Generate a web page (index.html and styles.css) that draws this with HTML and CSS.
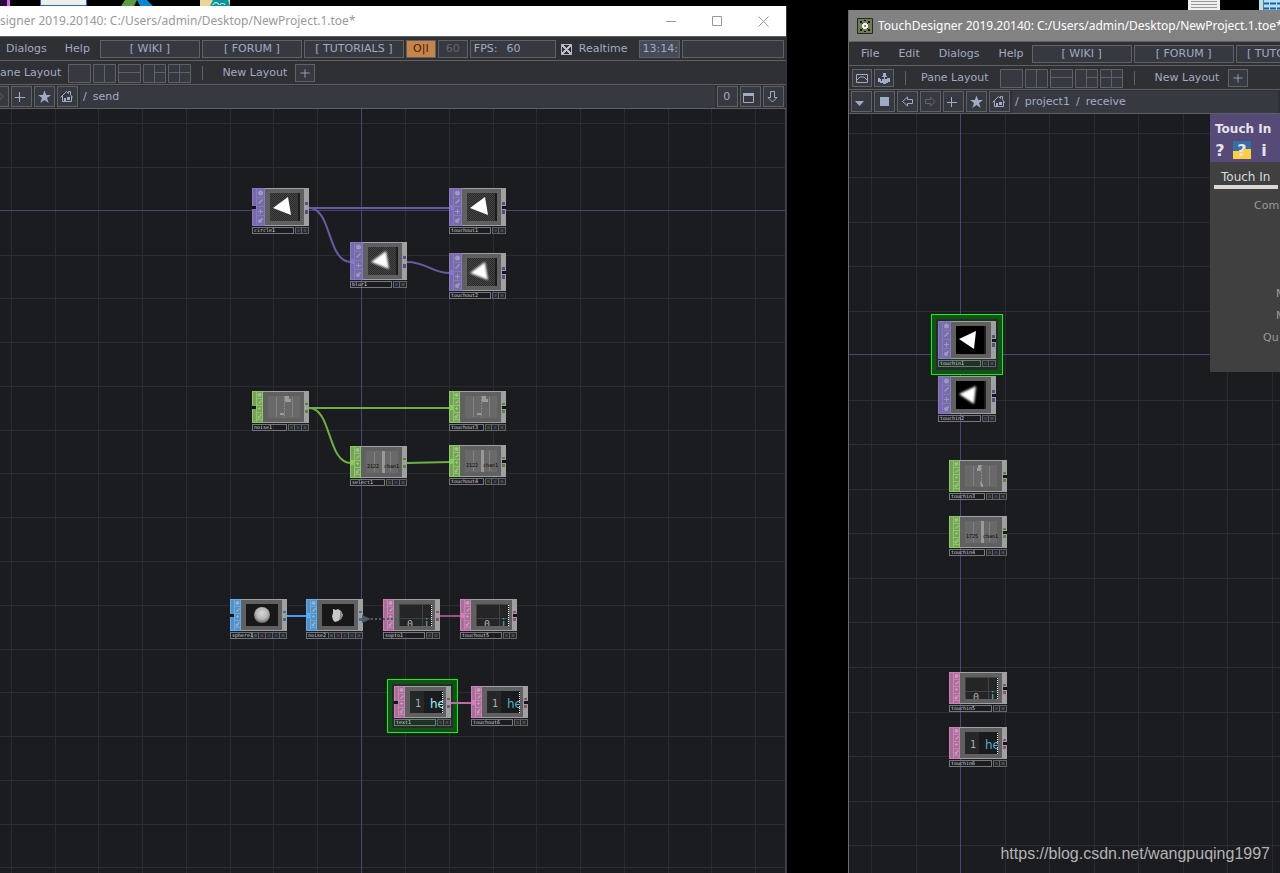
FILE: index.html
```html
<!DOCTYPE html>
<html lang="en">
<head>
<meta charset="utf-8">
<title>TouchDesigner</title>
<link rel="stylesheet" href="styles.css">
</head>
<body>
<svg class="defs" width="0" height="0" aria-hidden="true">
  <defs>
    <pattern id="check" width="2" height="2" patternUnits="userSpaceOnUse"><path d="M0 0h2v2h-2z" fill="#2a2a2a"/><path d="M0 0h1v1h-1zM1 1h1v1h-1z" fill="#454545"/></pattern>
    <filter id="soft"><feGaussianBlur stdDeviation="1"/></filter>
    <radialGradient id="ball" cx=".5" cy=".4" r=".6"><stop offset="0" stop-color="#d8d8d8"/><stop offset=".6" stop-color="#b5b5b5"/><stop offset="1" stop-color="#666"/></radialGradient>
  </defs>
  <symbol id="ports-top" viewBox="0 0 13 38">
    <path d="M0 0h13v38H0z" fill="currentColor" opacity=".6"/>
    <path d="M.5.5h12v37H.5zM4.500 0v38M4 9.500h9M4 18.500h9M4 27.500h9" fill="none" stroke="currentColor"/>
    <g fill="#c8c0e6" opacity=".5"><circle cx="8.500" cy="5" r="2.500"/><path d="M6 15l4-4 1 1-4 4zM6 23h2v-2h1v2h2v1H9v2H8v-2H6z"/><circle cx="8" cy="33" r="2"/><circle cx="10" cy="31" r="1"/></g>
  </symbol>
  <symbol id="ports-small" viewBox="0 0 11 32">
    <path d="M0 0h11v32H0z" fill="currentColor" opacity=".6"/>
    <path d="M.5.5h10v31H.5zM4.500 0v32M4 7.500h7M4 14.500h7M4 21.500h7M4 28.500h7" fill="none" stroke="currentColor"/>
    <g fill="#e8e8e8" opacity=".4"><circle cx="7.500" cy="4" r="2"/><path d="M6 12l3-3 1 1-3 3zM6 17h1v-1h1v1h1v1H8v1H7v-1H6z"/><circle cx="7" cy="26" r="1.500"/><circle cx="8.500" cy="24" r="1"/></g>
  </symbol>
  <symbol id="out-top" viewBox="0 0 5 38"><path d="M0 0h5v38H0z" fill="#a0a0a0"/><path d="M1 14h3v3H1zM1 22h3v4H1z" fill="currentColor"/><path d="M1 14h3v3H1zM1 22h3v4H1z" fill="#000" opacity=".35"/></symbol>
  <symbol id="out-small" viewBox="0 0 5 32"><path d="M0 0h5v32H0z" fill="#a0a0a0"/><path d="M1 12h3v2H1zM1 19h3v3H1z" fill="currentColor"/><path d="M1 12h3v2H1zM1 19h3v3H1z" fill="#000" opacity=".35"/></symbol>

  <symbol id="v-tri" viewBox="0 0 30 28"><path d="M0 0h30v28H0z" fill="url(#check)"/><path d="M28 0h2v28h-2z" fill="#1c1c1c"/><path d="M3 15L18 4l3 18z" fill="#fff"/></symbol>
  <symbol id="v-blur" viewBox="0 0 30 28"><path d="M0 0h30v28H0z" fill="url(#check)"/><path d="M28 0h2v28h-2z" fill="#1c1c1c"/><path d="M3 15L18 4l3 18z" fill="#fff" filter="url(#soft)"/></symbol>
  <symbol id="v-tri-black" viewBox="0 0 30 28"><path d="M0 0h30v28H0z"/><path d="M28 0h2v28h-2z" fill="#1c1c1c"/><path d="M3 13L20 5l-2 18z" fill="#fff"/></symbol>
  <symbol id="v-blur-black" viewBox="0 0 30 28"><path d="M0 0h30v28H0z"/><path d="M28 0h2v28h-2z" fill="#1c1c1c"/><path d="M3 13L20 5l-2 18z" fill="#fff" filter="url(#soft)"/></symbol>
  <symbol id="v-noise" viewBox="0 0 32 22"><path d="M0 0h32v22H0z" fill="#696969"/><path d="M8 1h1v20H8zM24 1h1v20h-1z" fill="#828282"/><path d="M16.500 0v22" stroke="#8a8a8a" stroke-dasharray="2 1"/><path d="M17 0h4v3h2v3h-6zM12 17h4v2h-4z" fill="#9c9c9c"/></symbol>
  <symbol id="v-noise-in" viewBox="0 0 32 22"><path d="M0 0h32v22H0z" fill="#696969"/><path d="M8 1h1v20H8zM24 1h1v20h-1z" fill="#828282"/><path d="M16.500 0v22" stroke="#8a8a8a" stroke-dasharray="2 1"/><path d="M13 0h3v6h-4V3h1zM15 17h2v2h1v3h-2z" fill="#9c9c9c"/></symbol>
  <symbol id="v-chan" viewBox="0 0 32 22"><path d="M0 0h32v22H0z" fill="#696969"/><path d="M8 1h1v20H8zM24 1h1v20h-1z" fill="#828282"/><path d="M16 0h3v22h-3z" fill="#999"/></symbol>
  <symbol id="v-sphere" viewBox="0 0 32 22"><path d="M0 0h32v22H0z" fill="#181818"/><circle cx="16" cy="11" r="8" fill="url(#ball)"/></symbol>
  <symbol id="v-rock" viewBox="0 0 32 22"><path d="M0 0h32v22H0z" fill="#181818"/><path d="M11 5l3 1 2-1 3 2 2 4-2 4-3 2-3 1-2-2-1-4 1-3z" fill="#c8c8c8"/><path d="M18 7l3 4-2 4-2 1 1-4z" fill="#8a8a8a"/></symbol>
  <symbol id="v-table" viewBox="0 0 33 22"><path d="M0 0h33v22H0z" fill="#242526"/><path d="M0 .5h33M.5 0v22M23.500 0v22M0 14.500h33" stroke="#424242"/><path d="M32.500 1v21" stroke="#fff" stroke-dasharray="1 1"/></symbol>
  <symbol id="v-text" viewBox="0 0 33 22"><path d="M0 0h33v22H0z" fill="#262728"/><path d="M14 0h19v22H14z" fill="#1a1b1c"/><path d="M32.500 1v21" stroke="#fff" stroke-dasharray="1 1"/></symbol>

  <symbol id="i-plus" viewBox="0 0 19 19"><path d="M9.500 5v10M4 9.500h11" stroke="currentColor" fill="none"/></symbol>
  <symbol id="i-add" viewBox="0 0 19 19"><path d="M7.500 5v10M3 10.500h10" stroke="currentColor" fill="none"/></symbol>
  <symbol id="i-star" viewBox="0 0 19 19"><path d="M9.500 3.500l1.700 4.500H16l-4 3 1.700 5-4.200-3-4.200 3L7 11 3 8h4.800z" fill="currentColor"/></symbol>
  <symbol id="i-home" viewBox="0 0 19 19"><path d="M2.500 10.500l6-6 2 2v-2h2v3l2 3M4.500 9v5.500h9V9" stroke="currentColor" fill="none"/><path d="M6 11h2v4H6zM9 10h3v3H9z" fill="currentColor"/></symbol>
  <symbol id="i-right" viewBox="0 0 19 19"><path d="M4.500 7.500h5V5L14 9.500 9.500 14v-2.500h-5z" stroke="currentColor" fill="none"/></symbol>
  <symbol id="i-left" viewBox="0 0 19 19"><path d="M14.500 7.500h-5V5L4.500 9.500 9.500 14v-2.500h5z" stroke="currentColor" fill="none"/></symbol>
  <symbol id="i-down" viewBox="0 0 19 19"><path d="M6.500 4.500h4v6H13L8.500 15 4 10.500h2.500z" stroke="currentColor" fill="none"/></symbol>
  <symbol id="i-pane" viewBox="0 0 19 19"><path d="M2.500 6.500h10v9h-10z" stroke="currentColor" fill="none"/><path d="M2 6h11v3H2z" fill="currentColor"/></symbol>
  <symbol id="i-caret" viewBox="0 0 19 19"><path d="M3 9h9l-4.500 5z" fill="currentColor"/></symbol>
  <symbol id="i-stop" viewBox="0 0 19 19"><path d="M5 5h9v9H5z" fill="currentColor"/></symbol>
  <symbol id="i-curve" viewBox="0 0 18 16"><path d="M3.500 4.500h11v8h-11zM4 10l3-3h4l3 3" stroke="currentColor" fill="none"/></symbol>
  <symbol id="i-dock" viewBox="0 0 18 16"><path d="M8 3h3v3H8zM9 5h1v9H9zM7 6h5v1H7zM3 9h3v2h7V9h2v3h-2v1h-2v1H8v-1H5v-1H3z" fill="currentColor"/><path d="M3 8h2v3H3zM12 8h3v3h-3zM7 9h5v4H7z" fill="currentColor"/></symbol>
  <symbol id="l-1" viewBox="0 0 23 19"><path d="M.5.5h22v18H.5z"/></symbol>
  <symbol id="l-2" viewBox="0 0 23 19"><path d="M.5.5h22v18H.5zM11.500 0v19"/></symbol>
  <symbol id="l-3" viewBox="0 0 23 19"><path d="M.5.5h22v18H.5zM0 8.500h23"/></symbol>
  <symbol id="l-4" viewBox="0 0 23 19"><path d="M.5.5h22v18H.5zM11.500 0v19M11 8.500h12"/></symbol>
  <symbol id="l-5" viewBox="0 0 23 19"><path d="M.5.5h22v18H.5zM11.500 0v19M0 8.500h23"/></symbol>
</svg>

<main class="desktop">
  <svg class="shortcuts shortcuts-left" width="240" height="6" aria-hidden="true">
    <path d="M0 0h7v6H0z" fill="#2c0a38"/><path d="M7 0h3v6H7z" fill="#d267e6"/>
    <path d="M40 0h47v6H40z" fill="#2766b0"/><path d="M41 0h45v5H41z" fill="#ecece8"/>
    <path d="M125 0h12l-3 6h-13z" fill="#5f9a3c"/><path d="M137 0h10l6 6h-13z" fill="#0a86cf"/>
    <path d="M200 0h30v6h-30z" fill="#e9d59a"/><path d="M210 6l3-6h15l2 6z" fill="#0c959b"/><path d="M213 5c0-3 6-3 6 0M220 5c0-2 5-2 5 0" stroke="#fff" fill="none"/>
  </svg>
  <svg class="shortcuts shortcuts-right" width="92" height="10" aria-hidden="true">
    <path d="M0 0h32v10H0z" fill="#f0f0f0"/><path d="M3 1.500h26M3 4.500h26M3 7.500h26" stroke="#999"/>
    <path d="M71 0h21v10H71z" fill="#b6ddf0"/><path d="M75 3.500h17M75 8.500h17" stroke="#1465a8" stroke-width="2" stroke-dasharray="6 1"/><path d="M75.500 0v10" stroke="#777"/>
  </svg>

  <section class="window send">
    <header class="titlebar">
      <h1 class="title">signer 2019.20140: C:/Users/admin/Desktop/NewProject.1.toe*</h1>
      <div class="controls">
        <button aria-label="Minimize"><svg width="11" height="11"><path d="M0 5.500h10"/></svg></button>
        <button aria-label="Maximize"><svg width="11" height="11"><path d="M.5.5h9v9h-9z"/></svg></button>
        <button aria-label="Close"><svg width="11" height="11"><path d="M.5.5l10 10M10.500.5l-10 10"/></svg></button>
      </div>
    </header>
    <nav class="bar menubar">
      <div class="menus"><button class="menu">Dialogs</button><button class="menu">Help</button></div>
      <button class="box link">[ WIKI ]</button>
      <button class="box link">[ FORUM ]</button>
      <button class="box link">[ TUTORIALS ]</button>
      <button class="box power">O|I</button>
      <button class="box rate">60</button>
      <output class="box fps"><span>FPS:</span><span>60</span></output>
      <label class="realtime"><input type="checkbox" checked>Realtime</label>
      <output class="box clock">13:14:</output>
      <input class="box status" type="text" aria-label="Status">
    </nav>
    <div class="bar toolbar">
      <span class="pane-label">ane Layout</span>
      <div class="layouts">
        <button aria-label="Single pane"><svg><use href="#l-1"/></svg></button><button aria-label="Split left and right"><svg><use href="#l-2"/></svg></button><button aria-label="Split top and bottom"><svg><use href="#l-3"/></svg></button><button aria-label="Split right in two"><svg><use href="#l-4"/></svg></button><button aria-label="Quad"><svg><use href="#l-5"/></svg></button>
      </div>
      <span class="rule"></span>
      <span class="new-label">New Layout</span>
      <button class="box tool" aria-label="Add layout"><svg><use href="#i-plus"/></svg></button>
    </div>
    <div class="bar pathbar">
      <button class="box icon cut dim" aria-label="Forward"><svg><use href="#i-right"/></svg></button>
      <button class="box icon" aria-label="Add"><svg><use href="#i-add"/></svg></button>
      <button class="box icon" aria-label="Bookmarks"><svg><use href="#i-star"/></svg></button>
      <button class="box icon" aria-label="Home"><svg><use href="#i-home"/></svg></button>
      <div class="path"><span>/</span><span>send</span></div>
      <button class="box icon zero">0</button>
      <button class="box icon" aria-label="Maximize pane"><svg><use href="#i-pane"/></svg></button>
      <button class="box icon" aria-label="Collapse"><svg><use href="#i-down"/></svg></button>
    </div>
    <div class="network">
      <svg class="backdrop" aria-hidden="true">
        <path class="grid" d="M11.500 0v2000M55.500 0v2000M98.500 0v2000M142.500 0v2000M186.500 0v2000M230.500 0v2000M273.500 0v2000M317.500 0v2000M405.500 0v2000M449.500 0v2000M493.500 0v2000M536.500 0v2000M580.500 0v2000M624.500 0v2000M668.500 0v2000M711.500 0v2000M755.500 0v2000M0 14.500h3000M0 58.500h3000M0 146.500h3000M0 189.500h3000M0 233.500h3000M0 277.500h3000M0 321.500h3000M0 364.500h3000M0 408.500h3000M0 452.500h3000M0 496.500h3000M0 540.500h3000M0 583.500h3000M0 627.500h3000M0 671.500h3000M0 715.500h3000M0 758.500h3000"/>
        <path class="axis" d="M361.500 0v2000M0 101.500h3000"/>
        <g fill="none" stroke-width="2">
          <path stroke="#6c59a5" d="M309 99h141M309 99c23 0 18 54 42 54M407 153c20 0 24 11 43 11"/>
          <path stroke="#6fae46" d="M309 299h141M309 299c23 0 18 55 42 55M407 354l43-1"/>
          <path stroke="#4a9bf0" d="M287 507h20"/>
          <path stroke="#9a5484" d="M440 507h20"/>
        </g>
      </svg>
      <div class="selection" style="left:387px;top:570px;width:71px;height:54px"></div>

      <article class="node top" style="left:252px;top:79px"><div class="body"><svg class="ports"><use href="#ports-top"/></svg><svg class="view"><use href="#v-tri"/></svg><svg class="outs"><use href="#out-top"/></svg><i class="gap in"></i></div><div class="tag"><span class="name">circle1</span><i class="flag blue"></i><i class="flag"></i></div></article>
      <article class="node top" style="left:449px;top:79px"><div class="body"><svg class="ports"><use href="#ports-top"/></svg><svg class="view"><use href="#v-tri"/></svg><svg class="outs"><use href="#out-top"/></svg><i class="plug"></i><i class="gap out"></i></div><div class="tag"><span class="name">touchout1</span><i class="flag blue"></i><i class="flag"></i></div></article>
      <article class="node top" style="left:350px;top:133px"><div class="body"><svg class="ports"><use href="#ports-top"/></svg><svg class="view"><use href="#v-blur"/></svg><svg class="outs"><use href="#out-top"/></svg><i class="plug"></i></div><div class="tag"><span class="name">blur1</span><i class="flag blue"></i><i class="flag"></i></div></article>
      <article class="node top" style="left:449px;top:144px"><div class="body"><svg class="ports"><use href="#ports-top"/></svg><svg class="view"><use href="#v-blur"/></svg><svg class="outs"><use href="#out-top"/></svg><i class="plug"></i><i class="gap out"></i></div><div class="tag"><span class="name">touchout2</span><i class="flag blue"></i><i class="flag"></i></div></article>

      <article class="node chop" style="left:252px;top:282px"><div class="body"><svg class="ports"><use href="#ports-small"/></svg><svg class="view"><use href="#v-noise"/></svg><svg class="outs"><use href="#out-small"/></svg><i class="gap in"></i></div><div class="tag"><span class="name">noise1</span><i class="flag green"></i><i class="flag blue"></i><i class="flag"></i></div></article>
      <article class="node chop" style="left:449px;top:282px"><div class="body"><svg class="ports"><use href="#ports-small"/></svg><svg class="view"><use href="#v-noise"/></svg><svg class="outs"><use href="#out-small"/></svg><i class="plug"></i><i class="gap out"></i></div><div class="tag"><span class="name">touchout3</span><i class="flag green"></i><i class="flag blue"></i><i class="flag"></i></div></article>
      <article class="node chop" style="left:350px;top:337px"><div class="body"><svg class="ports"><use href="#ports-small"/></svg><svg class="view"><use href="#v-chan"/><text x="1" y="17">2122</text><text x="18" y="17">chan1</text></svg><svg class="outs"><use href="#out-small"/></svg><i class="plug"></i></div><div class="tag"><span class="name">select1</span><i class="flag green"></i><i class="flag blue"></i><i class="flag"></i></div></article>
      <article class="node chop" style="left:449px;top:336px"><div class="body"><svg class="ports"><use href="#ports-small"/></svg><svg class="view"><use href="#v-chan"/><text x="1" y="17">2122</text><text x="18" y="17">chan1</text></svg><svg class="outs"><use href="#out-small"/></svg><i class="plug"></i><i class="gap out"></i></div><div class="tag"><span class="name">touchout4</span><i class="flag green"></i><i class="flag blue"></i><i class="flag"></i></div></article>

      <article class="node sop" style="left:230px;top:490px"><div class="body"><svg class="ports"><use href="#ports-small"/></svg><svg class="view"><use href="#v-sphere"/></svg><svg class="outs"><use href="#out-small"/></svg><i class="gap in"></i></div><div class="tag"><span class="name">sphere1</span><i class="flag teal"></i><i class="flag red"></i><i class="flag violet"></i><i class="flag blue"></i><i class="flag"></i></div></article>
      <article class="node sop" style="left:306px;top:490px"><div class="body"><svg class="ports"><use href="#ports-small"/></svg><svg class="view"><use href="#v-rock"/></svg><svg class="outs"><use href="#out-small"/></svg><i class="plug"></i></div><div class="tag"><span class="name">noise2</span><i class="flag teal"></i><i class="flag red"></i><i class="flag violet"></i><i class="flag blue"></i><i class="flag"></i></div></article>
      <article class="node dat" style="left:383px;top:490px"><div class="body"><svg class="ports"><use href="#ports-small"/></svg><svg class="view"><use href="#v-table"/><text class="num" x="8" y="24">0</text><text class="code" x="26" y="24">i</text></svg><svg class="outs"><use href="#out-small"/></svg></div><div class="tag"><span class="name">sopto1</span><i class="flag green"></i><i class="flag"></i></div></article>
      <article class="node dat" style="left:460px;top:490px"><div class="body"><svg class="ports"><use href="#ports-small"/></svg><svg class="view"><use href="#v-table"/><text class="num" x="8" y="24">0</text><text class="code" x="26" y="24">i</text></svg><svg class="outs"><use href="#out-small"/></svg><i class="plug"></i><i class="gap out"></i></div><div class="tag"><span class="name">touchout5</span><i class="flag green"></i><i class="flag"></i></div></article>
      <article class="node dat" style="left:394px;top:577px"><div class="body"><svg class="ports"><use href="#ports-small"/></svg><svg class="view"><use href="#v-text"/><text class="num" x="5" y="16">1</text><text class="code hot" x="20" y="17">he</text></svg><svg class="outs"><use href="#out-small"/></svg><i class="gap in"></i></div><div class="tag"><span class="name">text1</span><i class="flag green"></i><i class="flag"></i></div></article>
      <article class="node dat" style="left:471px;top:577px"><div class="body"><svg class="ports"><use href="#ports-small"/></svg><svg class="view"><use href="#v-text"/><text class="num" x="5" y="16">1</text><text class="code" x="20" y="17">he</text></svg><svg class="outs"><use href="#out-small"/></svg><i class="plug"></i><i class="gap out"></i></div><div class="tag"><span class="name">touchout6</span><i class="flag green"></i><i class="flag"></i></div></article>
      <svg class="overlay" aria-hidden="true"><path d="M362 506l9 4-9 4z" fill="#4b5d6b"/><path d="M371 510h26" stroke="#4b5d6b" stroke-width="2" stroke-dasharray="2 2"/><path d="M451 594h20" stroke="#c069a6" stroke-width="2"/></svg>
    </div>
  </section>

  <section class="window receive">
    <header class="titlebar">
      <svg class="logo" width="16" height="16" aria-hidden="true"><path d="M.5.5h15v15H.5z" fill="#6f7d55" stroke="#23281c"/><path d="M4 4l8 8M12 4l-8 8" stroke="#11140c"/><path d="M3 3h2v2H3zM11 3h2v2h-2zM3 11h2v2H3zM11 11h2v2h-2zM7 2h2v1H7zM7 13h2v1H7z" fill="#11140c"/><circle cx="8" cy="8" r="3" fill="#fff"/><circle cx="8" cy="8" r="1" fill="#5a6644"/></svg>
      <h1 class="title">TouchDesigner 2019.20140: C:/Users/admin/Desktop/NewProject.1.toe*</h1>
    </header>
    <nav class="bar menubar">
      <div class="menus"><button class="menu">File</button><button class="menu">Edit</button><button class="menu">Dialogs</button><button class="menu">Help</button></div>
      <button class="box link">[ WIKI ]</button>
      <button class="box link">[ FORUM ]</button>
      <button class="box link">[ TUTORIALS ]</button>
    </nav>
    <div class="bar toolbar">
      <button class="box tool" aria-label="Curve editor"><svg><use href="#i-curve"/></svg></button>
      <button class="box tool" aria-label="Palette"><svg><use href="#i-dock"/></svg></button>
      <span class="rule"></span>
      <span class="pane-label">Pane Layout</span>
      <div class="layouts">
        <button aria-label="Single pane"><svg><use href="#l-1"/></svg></button><button aria-label="Split left and right"><svg><use href="#l-2"/></svg></button><button aria-label="Split top and bottom"><svg><use href="#l-3"/></svg></button><button aria-label="Split right in two"><svg><use href="#l-4"/></svg></button><button aria-label="Quad"><svg><use href="#l-5"/></svg></button>
      </div>
      <span class="rule"></span>
      <span class="new-label">New Layout</span>
      <button class="box tool" aria-label="Add layout"><svg><use href="#i-plus"/></svg></button>
    </div>
    <div class="bar pathbar">
      <button class="box icon" aria-label="Pane type"><svg><use href="#i-caret"/></svg></button>
      <button class="box icon" aria-label="Stop"><svg><use href="#i-stop"/></svg></button>
      <button class="box icon" aria-label="Back"><svg><use href="#i-left"/></svg></button>
      <button class="box icon dim" aria-label="Forward"><svg><use href="#i-right"/></svg></button>
      <button class="box icon" aria-label="Add"><svg><use href="#i-add"/></svg></button>
      <button class="box icon" aria-label="Bookmarks"><svg><use href="#i-star"/></svg></button>
      <button class="box icon" aria-label="Home"><svg><use href="#i-home"/></svg></button>
      <div class="path"><span>/</span><span>project1</span><span>/</span><span>receive</span></div>
    </div>
    <div class="network">
      <svg class="backdrop" aria-hidden="true">
        <path class="grid" d="M22.500 0v2000M67.500 0v2000M156.500 0v2000M200.500 0v2000M245.500 0v2000M289.500 0v2000M334.500 0v2000M378.500 0v2000M423.500 0v2000M0 19.500h3000M0 63.500h3000M0 108.500h3000M0 152.500h3000M0 197.500h3000M0 286.500h3000M0 330.500h3000M0 375.500h3000M0 419.500h3000M0 464.500h3000M0 508.500h3000M0 553.500h3000M0 598.500h3000M0 642.500h3000M0 687.500h3000M0 731.500h3000"/>
        <path class="axis" d="M111.500 0v2000M0 240.500h3000"/>
      </svg>
      <div class="selection" style="left:82px;top:200px;width:72px;height:61px"></div>
      <article class="node top" style="left:89px;top:207px"><div class="body"><svg class="ports"><use href="#ports-top"/></svg><svg class="view"><use href="#v-tri-black"/></svg><svg class="outs"><use href="#out-top"/></svg><i class="gap out"></i></div><div class="tag"><span class="name">touchin1</span><i class="flag blue"></i><i class="flag"></i></div></article>
      <article class="node top" style="left:89px;top:262px"><div class="body"><svg class="ports"><use href="#ports-top"/></svg><svg class="view"><use href="#v-blur-black"/></svg><svg class="outs"><use href="#out-top"/></svg><i class="gap out"></i></div><div class="tag"><span class="name">touchin2</span><i class="flag blue"></i><i class="flag"></i></div></article>
      <article class="node chop" style="left:100px;top:346px"><div class="body"><svg class="ports"><use href="#ports-small"/></svg><svg class="view"><use href="#v-noise-in"/></svg><svg class="outs"><use href="#out-small"/></svg><i class="gap out"></i></div><div class="tag"><span class="name">touchin3</span><i class="flag green"></i><i class="flag blue"></i><i class="flag"></i></div></article>
      <article class="node chop" style="left:100px;top:402px"><div class="body"><svg class="ports"><use href="#ports-small"/></svg><svg class="view"><use href="#v-chan"/><text x="1" y="17">1725</text><text x="18" y="17">chan1</text></svg><svg class="outs"><use href="#out-small"/></svg><i class="gap out"></i></div><div class="tag"><span class="name">touchin4</span><i class="flag green"></i><i class="flag blue"></i><i class="flag"></i></div></article>
      <article class="node dat" style="left:100px;top:558px"><div class="body"><svg class="ports"><use href="#ports-small"/></svg><svg class="view"><use href="#v-table"/><text class="num" x="8" y="24">0</text><text class="code" x="26" y="24">i</text></svg><svg class="outs"><use href="#out-small"/></svg><i class="gap out"></i></div><div class="tag"><span class="name">touchin5</span><i class="flag green"></i><i class="flag"></i></div></article>
      <article class="node dat" style="left:100px;top:613px"><div class="body"><svg class="ports"><use href="#ports-small"/></svg><svg class="view"><use href="#v-text"/><text class="num" x="5" y="16">1</text><text class="code" x="20" y="17">he</text></svg><svg class="outs"><use href="#out-small"/></svg><i class="gap out"></i></div><div class="tag"><span class="name">touchin6</span><i class="flag green"></i><i class="flag"></i></div></article>

      <aside class="params">
        <header class="params-head">
          <h2>Touch In</h2>
          <div class="helps">
            <button>?</button>
            <button class="python">?</button>
            <button>i</button>
          </div>
        </header>
        <button class="tab">Touch In</button>
        <ul class="fields">
          <li class="compress">Com</li>
          <li class="queue first">M</li>
          <li class="queue">M</li>
          <li class="quality">Qu</li>
        </ul>
      </aside>
    </div>
  </section>
  <a class="credit" href="#">https://blog.csdn.net/wangpuqing1997</a>
</main>
</body>
</html>
```

FILE: styles.css
```css
* { box-sizing: border-box; }

body {
  margin: 0;
  background: #000;
  color: #a0abc4;
  font: 11px/16px "DejaVu Sans", Verdana, sans-serif;
}

button, input, output {
  font: inherit;
  color: inherit;
  margin: 0;
  padding: 0;
  background: none;
  border: 0;
}

h1, h2, ul { margin: 0; padding: 0; font-size: inherit; list-style: none; }
.defs { position: absolute; }

.desktop {
  position: relative;
  height: 100vh;
  overflow: hidden;
}

.shortcuts { position: absolute; top: 0; }
.shortcuts-left { left: 0; }
.shortcuts-right { right: 0; }

/* windows */
.window {
  position: absolute;
  bottom: 0;
  display: flex;
  flex-direction: column;
  overflow: hidden;
  background: #2f3033;
}
.send { left: 0; top: 6px; width: 61.5%; border-right: 1px solid #34363b; }
.receive { left: 66.25%; right: 0; top: 10px; border-left: 1px solid #6b6b6b; }

.titlebar {
  flex: none;
  display: flex;
  align-items: center;
  white-space: nowrap;
}
.title { font: 12px/20px "Noto Sans", "Open Sans", sans-serif; }
.send .titlebar { height: 30px; background: #fff; color: #999; justify-content: space-between; }
.receive .titlebar { height: 31px; background: #828282; color: #fff; padding-left: 8px; gap: 5px; }
.logo { flex: none; }
.controls { display: flex; gap: 35px; padding-right: 17px; }
.controls button { display: flex; }
.controls svg { fill: none; stroke: #999; }

/* bars */
.bar {
  flex: none;
  display: flex;
  align-items: center;
  height: 24px;
  padding-top: 1px;
  border-top: 1px solid #5f6064;
  white-space: nowrap;
}
.box {
  display: flex;
  align-items: center;
  justify-content: center;
  flex: none;
  height: 18px;
  background: #373941;
  border: 1px solid #606164;
}
.menubar { gap: 2px; }
.menus { display: flex; gap: 18px; padding: 0 8px 0 6px; }
.receive .menus { padding: 0 6px 0 12px; gap: 19px; }
.link { width: 100px; }
.power { width: 30px; background: #c58548; color: #4a1808; }
.rate { width: 30px; color: #62666f; }
.fps { width: 86px; justify-content: flex-start; gap: 9px; padding-left: 3px; }
.realtime { display: flex; align-items: center; gap: 7px; padding: 0 10px 0 3px; }
.realtime input {
  appearance: none;
  width: 11px;
  height: 11px;
  border: 1px solid #b0b5c0;
  background:
    linear-gradient(45deg, transparent 40%, #b5c0d4 40% 60%, transparent 60%),
    linear-gradient(-45deg, transparent 40%, #b5c0d4 40% 60%, transparent 60%);
}
.clock { width: 41px; background: #454b57; justify-content: flex-start; padding-left: 2px; }
.status { flex: 1 1 40px; min-width: 0; margin-right: 2px; }

.toolbar { gap: 2px; }
.layouts { display: flex; gap: 2px; }
.layouts button { display: flex; }
.layouts svg { width: 23px; height: 19px; fill: #373941; stroke: #606164; }
.pane-label { padding-right: 5px; }
.rule { width: 1px; height: 14px; margin: 0 9px; background: #606164; }
.new-label { padding: 0 6px 0 8px; }
.tool { width: 20px; }
.tool svg { width: 18px; height: 16px; }
.receive .toolbar { padding-left: 3px; }
.receive .pane-label { padding: 0 9px 0 4px; }
.receive .new-label { padding: 0 7px 0 9px; }

.pathbar { gap: 2px; height: 25px; padding-top: 0; border-bottom: 1px solid #5f6064; padding-right: 2px; }
.receive .pathbar { padding-left: 2px; }
.icon { width: 21px; height: 21px; }
.icon svg { width: 19px; height: 19px; }
.cut { width: 9px; border-left: 0; justify-content: flex-end; overflow: hidden; }
.cut svg { flex: none; }
.dim { color: #62666f; }
.zero { padding-right: 2px; }
.path { flex: 1; display: flex; gap: 6px; height: 22px; padding-left: 3px; line-height: 22px; background: #373941; }

/* network editor */
.network {
  position: relative;
  flex: 1;
  overflow: hidden;
  background: #1b1c20;
}
.send .network { border-right: 1px solid #44464b; }
.backdrop, .overlay { position: absolute; inset: 0; width: 100%; height: 100%; pointer-events: none; }
.grid { stroke: #2a2b33; fill: none; }
.axis { stroke: #48447c; fill: none; }
.selection {
  position: absolute;
  border: 1px solid #0f0;
  background: #1c3324;
  box-shadow: inset 0 0 0 4px #15501a;
}

.node { position: absolute; width: 57px; }
.receive .node { width: 58px; }
.top { color: #8877cf; }
.chop { color: #87cc5c; }
.sop { color: #58aef8; }
.dat { color: #d47dbd; }
.body {
  position: relative;
  display: flex;
  align-items: center;
  height: 32px;
  background: #606060;
  box-shadow: inset 0 1px #a0a0a0, inset 0 -1px #a0a0a0;
}
.top .body { height: 38px; }
.ports { width: 11px; height: 32px; }
.top .ports { width: 13px; height: 38px; }
.outs { width: 5px; height: 32px; margin-left: auto; }
.top .outs { height: 38px; }
.view { width: 32px; height: 22px; margin-left: 5px; font: 5px "DejaVu Sans Mono", monospace; }
.chop .view, .sop .view { overflow: visible; }
.top .view { width: 30px; height: 28px; }
.dat .view { width: 33px; }
.num { font-size: 10px; fill: #b0b0b0; }
.code { font: 12px "DejaVu Sans", sans-serif; fill: #57acc8; }
.hot { fill: #9df0fa; }
.gap, .plug { position: absolute; width: 4px; }
.gap { top: 15px; height: 3px; background: #141518; }
.top .gap { top: 18px; }
.in { left: 0; }
.out { right: 0; }
.plug { left: 0; top: 14px; height: 5px; background: currentColor; }
.top .plug { top: 17px; }

.tag { display: flex; height: 7px; margin-top: 1px; }
.name {
  flex: 1;
  min-width: 0;
  z-index: 1;
  padding-left: 1px;
  margin-right: 1px;
  border: 1px solid #74777b;
  color: #d8d8d8;
  font: 5px/5px "DejaVu Sans Mono", monospace;
}
.sop .name { margin-right: 0; border-right: 0; }
.flag { width: 7px; border: 1px solid #606368; background: radial-gradient(circle, #4a4b4d 1px, #27282b 2px); }
.flag + .flag { width: 8px; margin-left: -1px; }
.green { background: radial-gradient(circle, #3a4c2e 1px, #27282b 2px); }
.blue { background: radial-gradient(circle, #2b4468 1px, #27282b 2px); }
.teal { background: radial-gradient(circle, #24665a 1px, #27282b 2px); }
.red { background: radial-gradient(circle, #63304f 1px, #27282b 2px); }
.violet { background: radial-gradient(circle, #443570 1px, #27282b 2px); }

/* parameter panel */
.params {
  position: absolute;
  top: 0;
  right: 0;
  width: 70px;
  height: 258px;
  overflow: hidden;
  background: #404040;
  color: #9b9b9b;
}
.params-head { height: 48px; padding: 7px 0 0 5px; background: #564b78; color: #e6e3ec; white-space: nowrap; }
.params-head h2 { font-size: 12px; font-weight: bold; }
.helps { display: flex; gap: 8px; padding-top: 4px; }
.helps button { width: 10px; height: 18px; font: bold 16px/19px "DejaVu Sans", sans-serif; }
.helps .python { width: 18px; background: linear-gradient(170deg, #346f9f 50%, #ffd043 50%); }
.tab {
  display: block;
  margin: 7px 2px 0 4px;
  padding: 0 0 0 7px;
  width: 64px;
  height: 20px;
  border-bottom: 4px solid #d9d6d3;
  color: #dcdcdc;
  font-size: 12px;
  text-align: left;
  white-space: nowrap;
}
.fields { padding-top: 6px; }
.fields li { height: 22px; line-height: 22px; }
.compress { padding-left: 44px; }
.queue { padding-left: 66px; }
.first { margin-top: 66px; }
.quality { padding-left: 53px; }

.credit {
  position: absolute;
  right: 10px;
  bottom: 9px;
  color: #b4b4b4;
  font: 16px/20px "Liberation Sans", Arial, sans-serif;
  text-decoration: none;
}
```
